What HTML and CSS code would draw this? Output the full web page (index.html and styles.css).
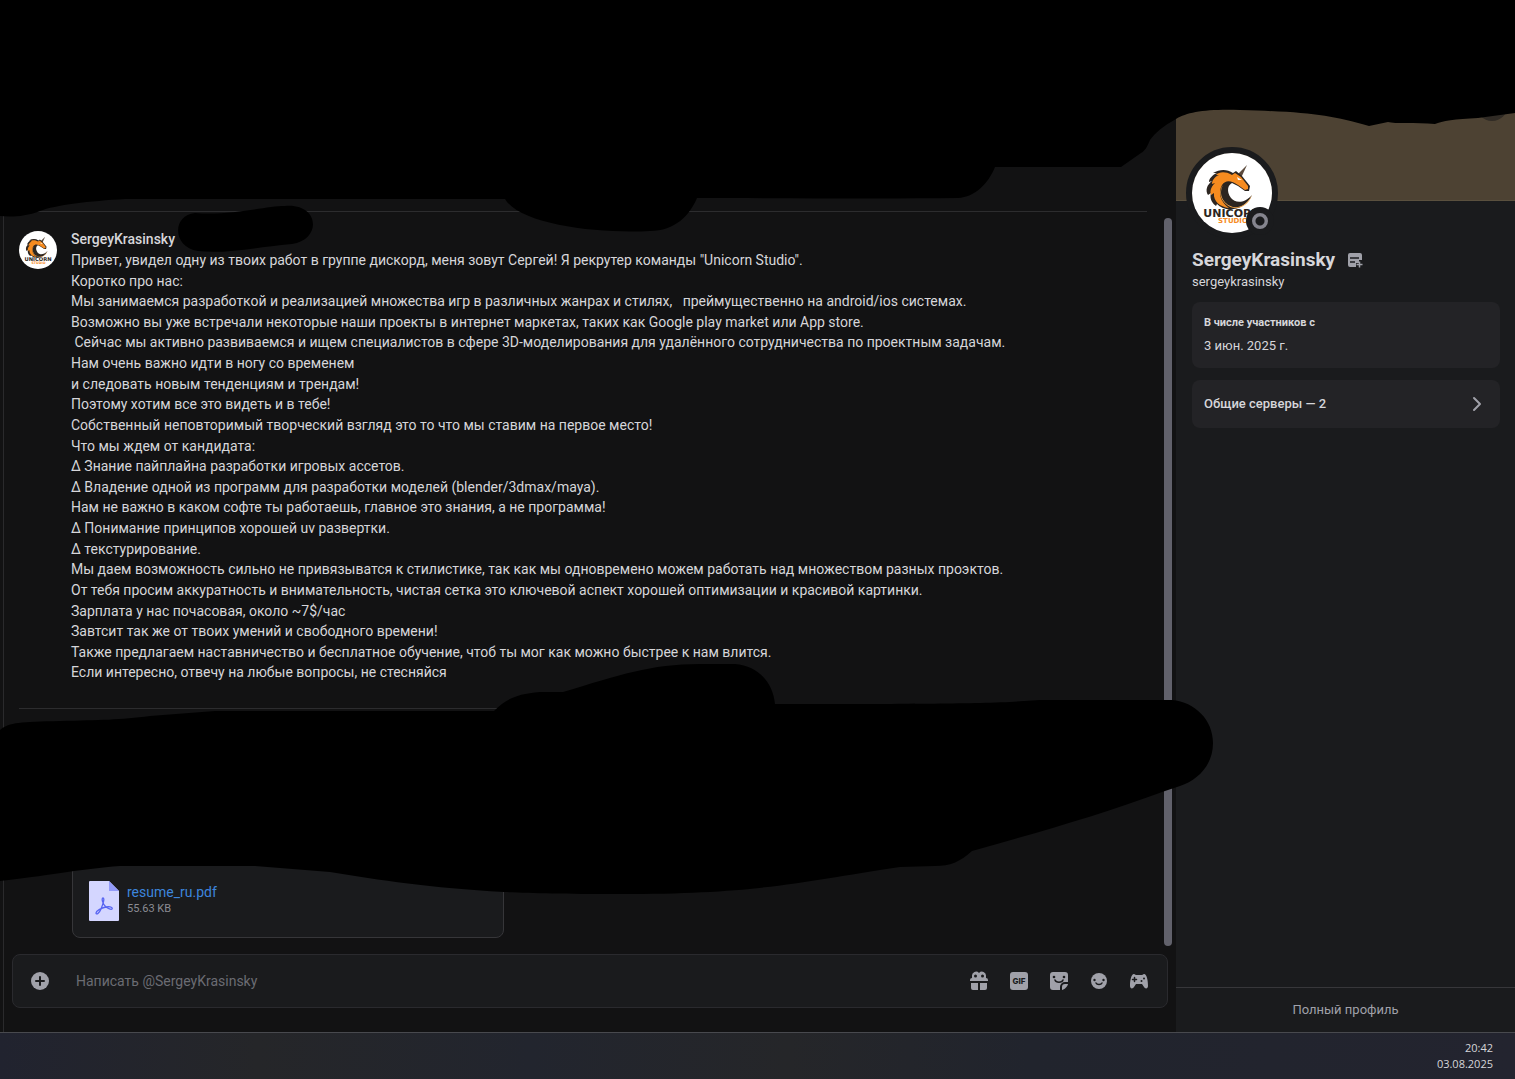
FILE: index.html
```html
<!DOCTYPE html>
<html lang="ru">
<head>
  <meta charset="UTF-8">
  <title>SergeyKrasinsky</title>
  <link rel="stylesheet" href="styles.css">
</head>
<body>
  <div class="app">
    <main class="chat">
      <div class="scroller">
        <div class="messages">
          <hr>
          <article class="message">
            <svg class="avatar" viewBox="0 0 80 80">
              <rect width="80" height="80" fill="#fff"/>
              <path d="M45 22 55 12 49 25Z" fill="#5b4a3c"/>
              <path d="M44 18 41 20C35 16 28 16 21 20L25 20C20 22 17 26 17 29L20 28C15 32 13 37 16 42L19 40C17 46 21 51 24 53L25 51C33 60 53 58 60 42C52 51 43 50 39 45C34 38 36 32 40 30L46 33 53 38 57 38 58 33 50 23Z" fill="#2c2520"/>
              <path d="M43 20 40 22C33 18 27 19 24 22L27 22C22 24 20 28 20 31L23 30C18 35 18 39 19 42L22 40C21 48 28 54 37 55C28 49 26 39 30 32C34 26 40 28 46 32L53 37 56 36 56 33 49 24Z" fill="#f68b1f"/>
              <path d="M31 32C26 41 31 51 41 54C50 55 56 50 60 42C56 55 42 58 35 52C27 46 27 37 31 32Z" fill="#f9a94a"/>
              <path d="M45 24l5 3-4 0z" fill="#fff"/>
              <text x="40" y="64" class="logo-name">UNICORN</text>
              <text x="41" y="70" class="logo-sub">STUDIO</text>
            </svg>
            <div class="message-body">
              <h3>SergeyKrasinsky</h3>
              <div class="message-text">
                <p>Привет, увидел одну из твоих работ в группе дискорд, меня зовут Сергей! Я рекрутер команды "Unicorn Studio".</p>
                <p>Коротко про нас:</p>
                <p>Мы занимаемся разработкой и реализацией множества игр в различных жанрах и стилях,   преймущественно на android/ios системах.</p>
                <p>Возможно вы уже встречали некоторые наши проекты в интернет маркетах, таких как Google play market или App store.</p>
                <p> Сейчас мы активно развиваемся и ищем специалистов в сфере 3D-моделирования для удалённого сотрудничества по проектным задачам.</p>
                <p>Нам очень важно идти в ногу со временем</p>
                <p>и следовать новым тенденциям и трендам!</p>
                <p>Поэтому хотим все это видеть и в тебе!</p>
                <p>Собственный неповторимый творческий взгляд это то что мы ставим на первое место!</p>
                <p>Что мы ждем от кандидата:</p>
                <p>Δ Знание пайплайна разработки игровых ассетов.</p>
                <p>Δ Владение одной из программ для разработки моделей (blender/3dmax/maya).</p>
                <p>Нам не важно в каком софте ты работаешь, главное это знания, а не программа!</p>
                <p>Δ Понимание принципов хорошей uv развертки.</p>
                <p>Δ текстурирование.</p>
                <p>Мы даем возможность сильно не привязыватся к стилистике, так как мы одновремено можем работать над множеством разных проэктов.</p>
                <p>От тебя просим аккуратность и внимательность, чистая сетка это ключевой аспект хорошей оптимизации и красивой картинки.</p>
                <p>Зарплата у нас почасовая, около ~7$/час</p>
                <p>Завтсит так же от твоих умений и свободного времени!</p>
                <p>Также предлагаем наставничество и бесплатное обучение, чтоб ты мог как можно быстрее к нам влится.</p>
                <p>Если интересно, отвечу на любые вопросы, не стесняйся</p>
              </div>
            </div>
          </article>
          <hr>
          <div class="file">
            <svg width="30" height="40" viewBox="0 0 30 40">
              <path d="M1 0H20L30 10V39a1 1 0 0 1-1 1H1a1 1 0 0 1-1-1V1a1 1 0 0 1 1-1z" fill="#d4d6ff"/>
              <path d="M20 0 30 10H20z" fill="#939bf9"/>
              <path d="M14 17c-2 0 0 6 2 8s6 4 7 3-1-3-6-2-10 4-10 6 3 1 5-4 4-11 2-11z" fill="none" stroke="#5865f2" stroke-width="1.3"/>
            </svg>
            <div class="file-info">
              <a href="#">resume_ru.pdf</a>
              <small>55.63 KB</small>
            </div>
          </div>
        </div>
        <div class="scrollbar"><div class="thumb"></div></div>
      </div>

      <form class="composer">
        <button type="button" aria-label="Добавить">
          <svg viewBox="0 0 20 20"><circle cx="10" cy="10" r="9"/><path d="M10 6v8M6 10h8" class="cut"/></svg>
        </button>
        <input type="text" placeholder="Написать @SergeyKrasinsky" aria-label="Написать @SergeyKrasinsky">
        <button type="button" aria-label="Подарок">
          <svg viewBox="0 0 20 20">
            <path d="M3 7h14a2 2 0 0 1 2 2v1H1V9a2 2 0 0 1 2-2zM2 12h7v7H4a2 2 0 0 1-2-2zM11 12h7v5a2 2 0 0 1-2 2h-5z"/>
            <path d="M3 8V5a4 4 0 0 1 7-3 4 4 0 0 1 7 3v3z"/>
            <circle cx="6.500" cy="5" r="1.500" class="hole"/><circle cx="13.500" cy="5" r="1.500" class="hole"/>
          </svg>
        </button>
        <button type="button" aria-label="GIF">
          <svg viewBox="0 0 20 20"><rect x="1" y="1" width="18" height="18" rx="3"/><text x="10" y="13" class="gif">GIF</text></svg>
        </button>
        <button type="button" aria-label="Стикеры">
          <svg viewBox="0 0 20 20">
            <path d="M4 1h12a3 3 0 0 1 3 3v7h-3a5 5 0 0 0-5 5v3H4a3 3 0 0 1-3-3V4a3 3 0 0 1 3-3z"/>
            <path d="M13 19v-3a3 3 0 0 1 3-3h3c0 2-4 6-6 6z"/>
            <path d="M6 9c1 3 7 3 8 0" class="cut thin"/><circle cx="5" cy="6" r="1.300" class="hole"/><circle cx="15" cy="6" r="1.300" class="hole"/>
          </svg>
        </button>
        <button type="button" aria-label="Эмодзи">
          <svg viewBox="0 0 20 20"><circle cx="10" cy="10" r="8"/><path d="M7 12c1 2 5 2 6 0" class="cut thin"/><circle cx="5.500" cy="9" r="1.200" class="hole"/><circle cx="14.500" cy="9" r="1.200" class="hole"/></svg>
        </button>
        <button type="button" aria-label="Активности">
          <svg viewBox="0 0 20 20">
            <path d="M5 3c1 0 1 1 2 1h6c1 0 1-1 2-1 3 0 4 7 4 12 0 3-3 3-4 1l-2-3H7l-2 3c-1 2-4 2-4-1C1 10 2 3 5 3z"/>
            <path d="M5.500 6.500v4M3.500 8.500h4" class="cut thin"/><circle cx="12.500" cy="10" r="1" class="hole"/><circle cx="15" cy="7.500" r="1" class="hole"/>
          </svg>
        </button>
      </form>
    </main>

    <aside class="profile">
      <div class="banner"><button class="more" aria-label="Ещё"></button></div>
      <div class="profile-body">
        <div class="profile-avatar">
          <svg class="picture" viewBox="0 0 80 80">
            <rect width="80" height="80" fill="#fff"/>
            <path d="M45 22 55 12 49 25Z" fill="#5b4a3c"/>
            <path d="M44 18 41 20C35 16 28 16 21 20L25 20C20 22 17 26 17 29L20 28C15 32 13 37 16 42L19 40C17 46 21 51 24 53L25 51C33 60 53 58 60 42C52 51 43 50 39 45C34 38 36 32 40 30L46 33 53 38 57 38 58 33 50 23Z" fill="#2c2520"/>
            <path d="M43 20 40 22C33 18 27 19 24 22L27 22C22 24 20 28 20 31L23 30C18 35 18 39 19 42L22 40C21 48 28 54 37 55C28 49 26 39 30 32C34 26 40 28 46 32L53 37 56 36 56 33 49 24Z" fill="#f68b1f"/>
            <path d="M31 32C26 41 31 51 41 54C50 55 56 50 60 42C56 55 42 58 35 52C27 46 27 37 31 32Z" fill="#f9a94a"/>
            <path d="M45 24l5 3-4 0z" fill="#fff"/>
            <text x="40" y="64" class="logo-name">UNICORN</text>
            <text x="41" y="70" class="logo-sub">STUDIO</text>
          </svg>
          <span class="status"></span>
        </div>
        <div class="names">
          <h2>SergeyKrasinsky
            <svg width="16" height="16" viewBox="0 0 16 16">
              <path d="M3 1h10a2 2 0 0 1 2 2v5h-3v3H9v4H3a2 2 0 0 1-2-2V3a2 2 0 0 1 2-2z"/>
              <path d="M3 6h9M3 10h5" stroke="#1a1b1e" stroke-width="1.500"/>
              <path d="M12.500 9.500v6M9.500 12.500h6" stroke="#a0a1a9" stroke-width="1.500"/>
            </svg>
          </h2>
          <div class="username">sergeykrasinsky</div>
        </div>
        <section class="card">
          <h4>В числе участников с</h4>
          <div>3 июн. 2025 г.</div>
        </section>
        <button class="card servers">Общие серверы — 2
          <svg width="16" height="16" viewBox="0 0 16 16"><path d="m5 2 6 6-6 6" fill="none" stroke="#a0a1a9" stroke-width="2" stroke-linecap="round" stroke-linejoin="round"/></svg>
        </button>
      </div>
      <button class="full-profile">Полный профиль</button>
    </aside>
  </div>

  <footer class="taskbar">
    <time datetime="2025-08-03T20:42">20:42<br>03.08.2025</time>
  </footer>

  <svg class="strokes" viewBox="0 0 1515 1079" preserveAspectRatio="none" aria-hidden="true">
    <path d="M0 0H1515V113L1478 118C1455 119 1442 121 1435 124C1415 122 1395 124 1388 122L1369 126C1330 115 1310 112 1240 110C1205 109 1188 112 1176 119C1163 126 1155 133 1150 140C1147 147 1145 151 1141 153L1121 167H995C988 184 975 197 958 198C880 199 780 198 697 198C690 215 675 231 650 231C600 234 520 225 505 199H125C90 201 55 205 40 211C25 217 10 217 0 216Z"/>
    <path d="M195 213C230 216 265 206 285 206C320 203 322 240 292 244C250 248 225 254 198 251C172 247 172 215 195 213Z"/>
    <path d="M0 730C10 722 20 722 60 721C100 720 120 720 150 716L215 711H494C505 700 515 694 540 692H563C620 675 650 664 700 664H735C758 666 773 682 775 704C900 704 960 704 1010 702L1040 700H1172C1195 702 1213 720 1213 743C1213 765 1198 780 1180 786L1165 791C1100 815 1040 832 972 851C960 862 950 866 935 866L900 867C800 882 760 894 620 894C560 894 530 893 504 892C430 888 380 880 330 872L255 866H120C80 869 60 874 0 881Z"/>
  </svg>
</body>
</html>
```

FILE: styles.css
```css
* {
  box-sizing: border-box;
}
body {
  margin: 0;
  min-height: 100vh;
  display: flex;
  flex-direction: column;
  position: relative;
  background: #121213;
  color: #d6d6da;
  font-family: Roboto, sans-serif;
  font-size: 14px;
  line-height: 20px;
}
h2, h3, h4, p {
  margin: 0;
}
button {
  border: none;
  padding: 0;
  background: none;
  color: inherit;
  font: inherit;
  cursor: pointer;
}
.logo-name, .logo-sub {
  font-family: 'DejaVu Sans', sans-serif;
  font-weight: bold;
  font-size: 11px;
  text-anchor: middle;
  fill: #2c2520;
}
.logo-sub {
  font-size: 7px;
  fill: #f68b1f;
}
.app {
  flex: 1;
  display: flex;
  padding-left: 3px;
}

/* chat */
.chat {
  flex: 1;
  min-width: 0;
  display: flex;
  flex-direction: column;
  border-left: 1px solid #2a2a2c;
}
.scroller {
  flex: 1;
  display: flex;
  padding-right: 4px;
}
.messages {
  flex: 1;
  display: flex;
  flex-direction: column;
  padding: 211px 17px 8px 15px;
}
hr {
  width: 100%;
  height: 1px;
  margin: 0;
  border: none;
  background: #2c2c2e;
}
.message {
  flex: 1;
  display: flex;
  gap: 14px;
  padding: 17px 0 25px;
}
.avatar {
  width: 38px;
  height: 38px;
  margin-top: 2px;
  border-radius: 50%;
}
.message-body {
  flex: 1;
  display: flex;
  flex-direction: column;
}
.message-body h3 {
  font-size: 14px;
  font-weight: 500;
  line-height: 21px;
}
.message-text {
  flex: 1;
  display: grid;
  grid-auto-rows: 1fr;
  white-space: pre-wrap;
}
.file {
  align-self: flex-start;
  display: flex;
  gap: 8px;
  width: 432px;
  margin: 155px 0 0 53px;
  padding: 16px;
  background: #1a1b1d;
  border: 1px solid #363639;
  border-radius: 8px;
}
.file-info {
  padding-top: 1px;
}
.file a {
  display: block;
  color: #3d85dc;
  text-decoration: none;
}
.file small {
  display: block;
  color: #8b8c93;
  font-size: 11px;
  line-height: 14px;
}
.scrollbar {
  width: 8px;
  display: flex;
  flex-direction: column;
  justify-content: flex-end;
}
.thumb {
  height: 77%;
  border-radius: 4px;
  background: #61616b;
}
.composer {
  display: flex;
  align-items: center;
  gap: 20px;
  height: 54px;
  margin: 8px 8px 24px;
  padding: 0 18px 0 17px;
  background: #1a1b1d;
  border: 1px solid #2a2a2e;
  border-radius: 8px;
}
.composer button {
  height: 20px;
}
.composer button svg {
  display: block;
  width: 20px;
  height: 20px;
  fill: #a0a1a9;
}
.composer input {
  flex: 1;
  min-width: 0;
  padding: 0 6px;
  border: none;
  outline: none;
  background: none;
  color: inherit;
  font: inherit;
}
.composer input::placeholder {
  color: #6b6c73;
}
.composer .cut {
  fill: none;
  stroke: #1a1b1d;
  stroke-width: 2;
  stroke-linecap: round;
}
.composer .thin {
  stroke-width: 1.5;
}
.composer .hole {
  fill: #1a1b1d;
}
.gif {
  font-family: Inter, sans-serif;
  font-weight: 800;
  font-size: 8px;
  text-anchor: middle;
  fill: #1a1b1d;
}

/* profile */
.profile {
  width: 339px;
  display: flex;
  flex-direction: column;
  background: #1a1b1d;
}
.banner {
  height: 201px;
  padding: 89px 7px 0 0;
  text-align: right;
  background: #4d4233;
  border-bottom: 1px solid #5a503e;
}
.more {
  width: 32px;
  height: 32px;
  border-radius: 50%;
  background: #302b25;
}
.profile-body {
  flex: 1;
  display: flex;
  flex-direction: column;
  gap: 12px;
  padding: 0 15px 0 16px;
}
.profile-avatar {
  position: relative;
  width: 92px;
  height: 92px;
  margin: -54px 0 -4px -6px;
  border: 6px solid #1a1b1d;
  border-radius: 50%;
}
.picture {
  display: block;
  width: 80px;
  height: 80px;
  border-radius: 50%;
}
.status {
  position: absolute;
  right: -2px;
  bottom: -2px;
  width: 28px;
  height: 28px;
  border: 6px solid #1a1b1d;
  border-radius: 50%;
  background: radial-gradient(#1a1b1d 4px, #85858e 5px);
}
h2 {
  display: flex;
  align-items: center;
  gap: 12px;
  font-size: 19px;
  line-height: 26px;
}
h2 svg {
  fill: #a0a1a9;
}
.username {
  font-size: 13px;
  line-height: 17px;
}
.card {
  padding: 12px;
  border-radius: 8px;
  background: #232326;
  font-size: 13px;
}
.card h4 {
  margin-bottom: 4px;
  font-size: 11px;
  line-height: 18px;
}
.servers {
  display: flex;
  align-items: center;
  justify-content: space-between;
  height: 48px;
  padding: 0 15px 0 12px;
  font-weight: 500;
}
.full-profile {
  height: 45px;
  border-top: 1px solid #37373a;
  color: #a0a1a9;
  font-size: 13px;
}

/* taskbar */
.taskbar {
  height: 47px;
  padding: 7px 22px 0 0;
  border-top: 1px solid #48494e;
  background: linear-gradient(90deg, #21232f, #252629 17%, #22252e 35%, #252629 52%, #21242d 68%, #23242f);
  font-family: 'Open Sans', sans-serif;
  font-size: 11px;
  line-height: 16px;
  text-align: right;
}

/* black brush strokes over the page */
.strokes {
  position: absolute;
  top: 0;
  left: 0;
  width: 100%;
  height: 100%;
  pointer-events: none;
}
```
